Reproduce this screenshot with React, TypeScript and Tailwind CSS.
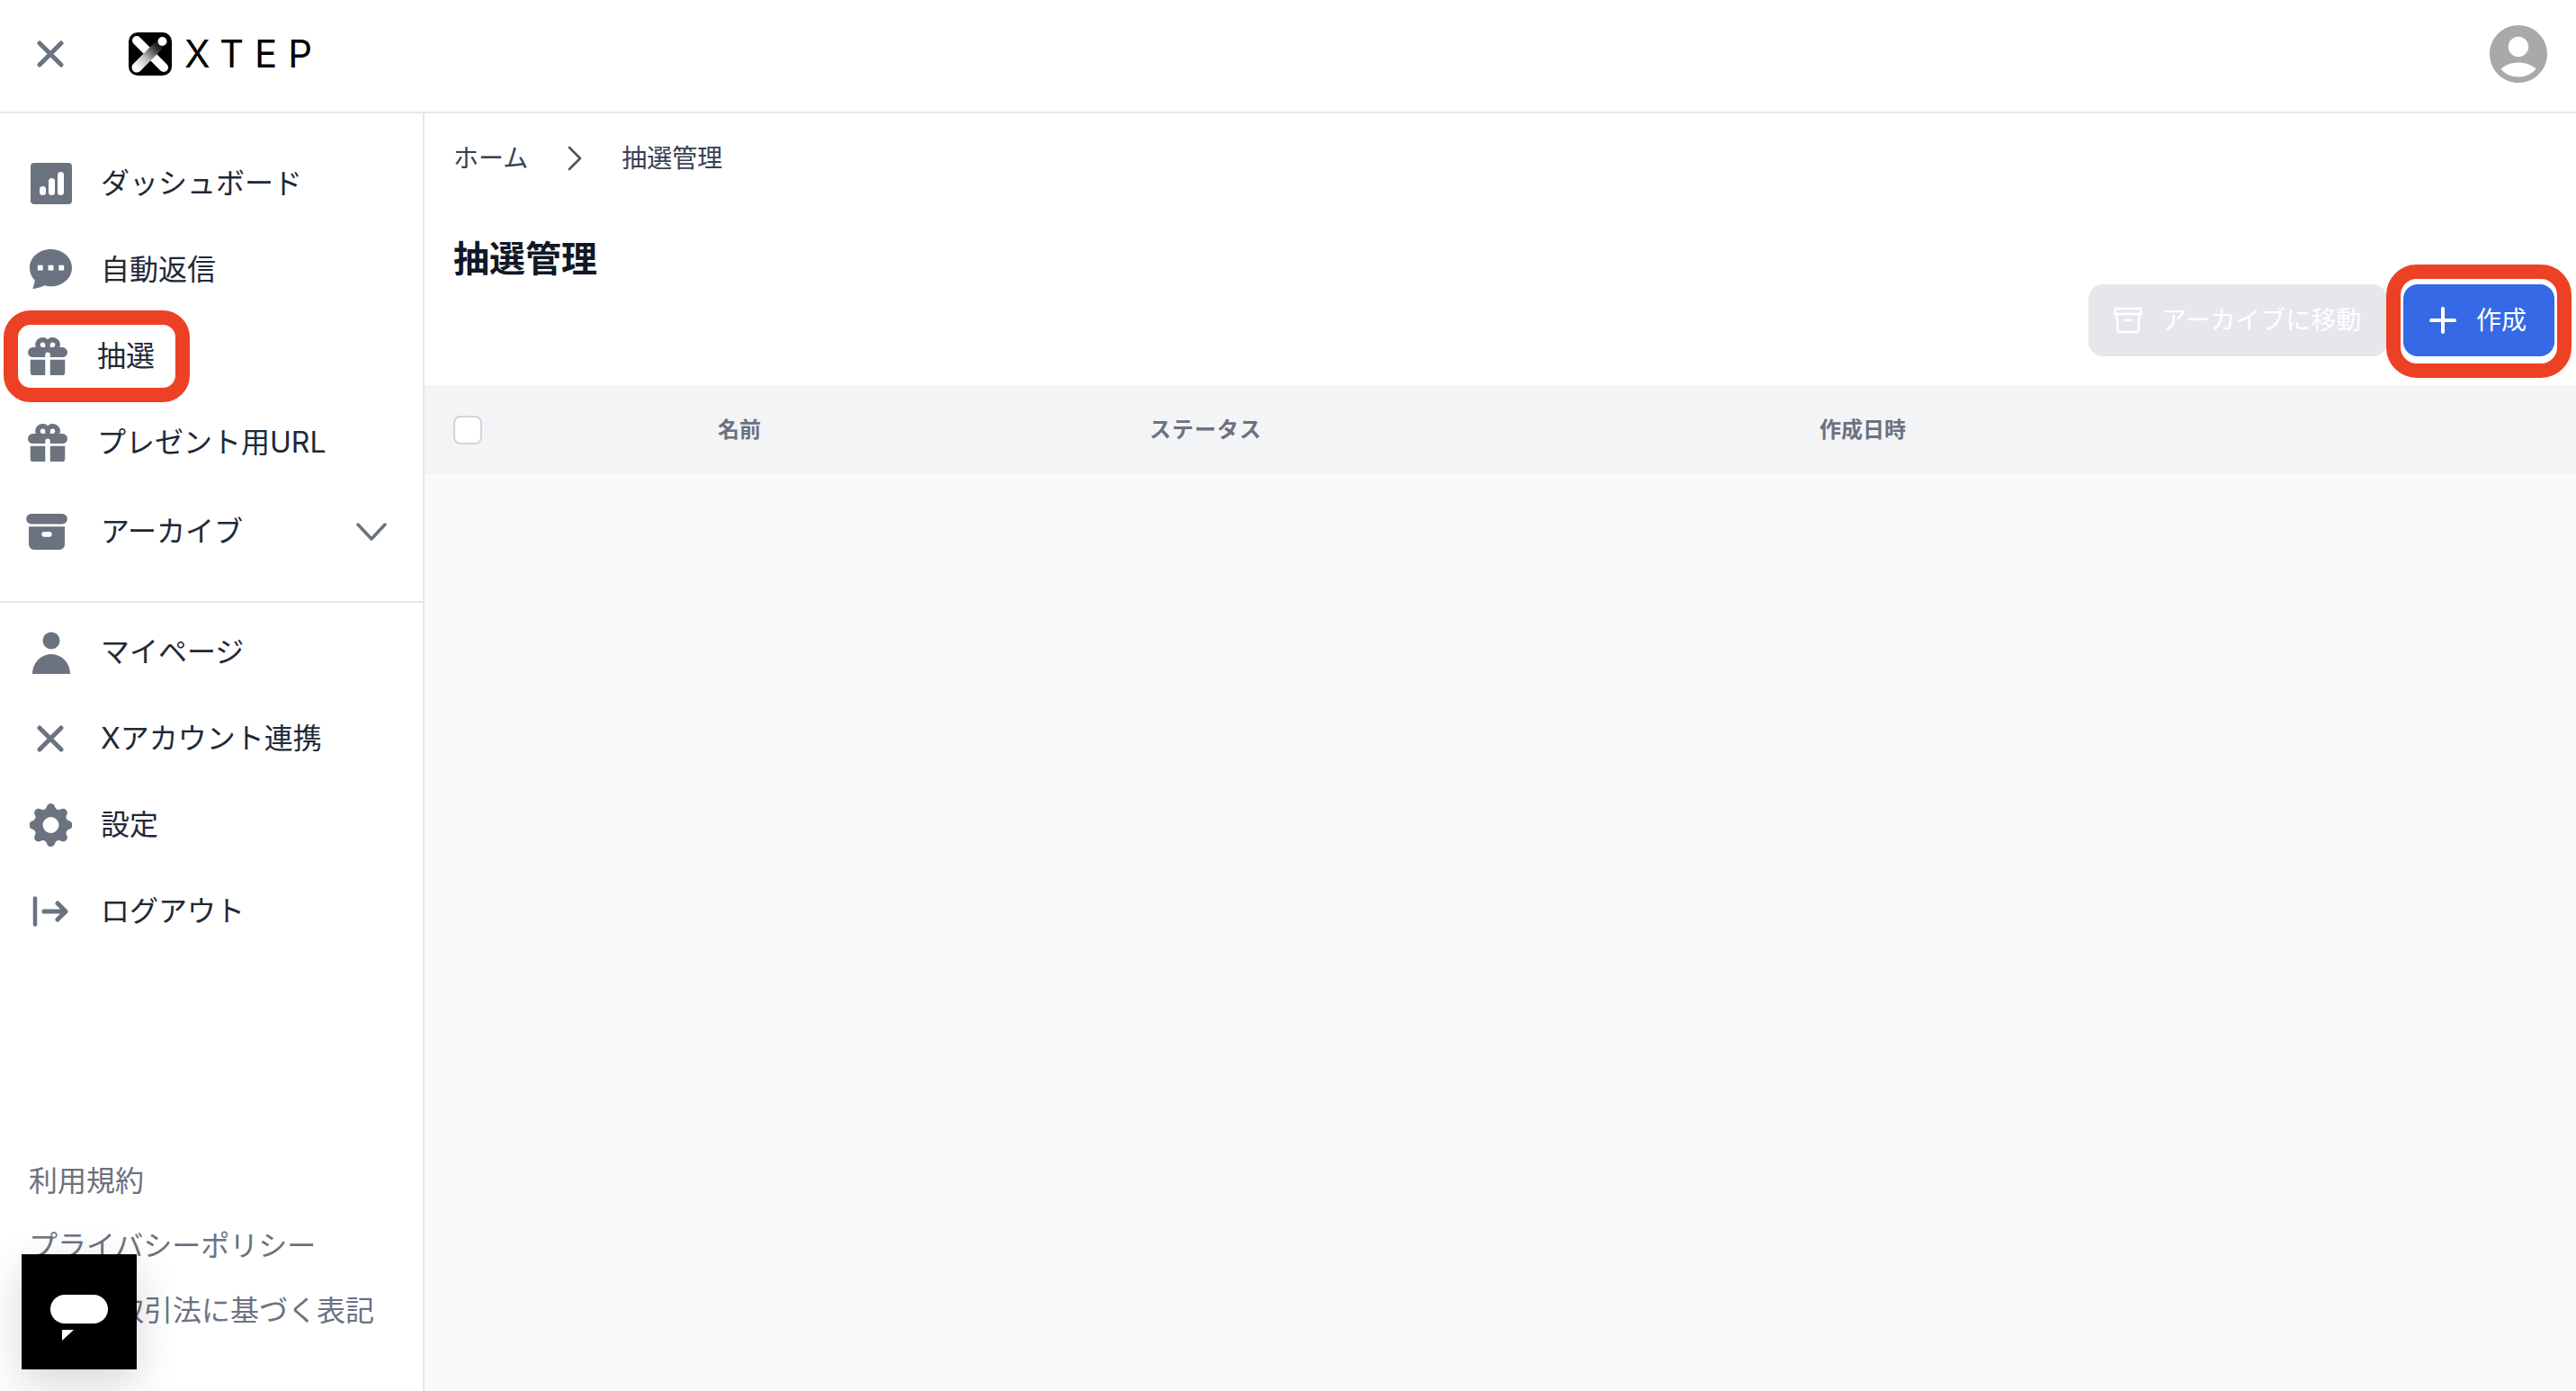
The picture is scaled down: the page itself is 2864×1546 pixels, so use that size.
import type { ReactNode } from "react";

function GiftIcon() {
  return (
    <svg viewBox="2 2 16 15.2" className="ml-[7px] h-[42px] w-[44px] fill-[#6b7280]">
      <path
        fillRule="evenodd"
        clipRule="evenodd"
        d="M5 5a3 3 0 015-2.236A3 3 0 0114.83 6H16a2 2 0 110 4h-5V9a1 1 0 10-2 0v1H4a2 2 0 110-4h1.17C5.06 5.687 5 5.35 5 5zm4 1V5a1 1 0 10-1 1h1zm3 0a1 1 0 10-1-1v1h1z"
      />
      <path d="M9 11H3v5a2 2 0 002 2h4v-7zM11 18h4a2 2 0 002-2v-5h-6v7z" />
    </svg>
  );
}

function ChartIcon() {
  return (
    <svg viewBox="0 0 46 46" className="ml-[10px] h-[46px] w-[46px]">
      <rect width="46" height="46" rx="4" fill="#6b7280" />
      <rect x="10" y="26" width="7" height="10" rx="3.5" fill="#fff" />
      <rect x="20" y="17" width="7" height="19" rx="3.5" fill="#fff" />
      <rect x="30" y="10" width="7" height="26" rx="3.5" fill="#fff" />
    </svg>
  );
}

function ChatIcon() {
  return (
    <svg viewBox="2 3 16 15.6" className="ml-[9px] h-[46px] w-[47px] fill-[#6b7280]">
      <path
        fillRule="evenodd"
        clipRule="evenodd"
        d="M18 10c0 3.866-3.582 7-8 7a8.841 8.841 0 01-2.347-.306c-.584.296-1.925.864-4.181 1.234-.2.032-.352-.176-.273-.362.354-.836.674-1.95.77-2.966C2.744 13.566 2 11.853 2 10c0-3.866 3.582-7 8-7s8 3.134 8 7zM7 9H5v2h2V9zm8 0h-2v2h2V9zM9 9h2v2H9V9z"
      />
    </svg>
  );
}

function ArchiveIcon() {
  return (
    <svg viewBox="2 3 16 14" className="ml-[5px] h-[40px] w-[46px] fill-[#6b7280]">
      <path d="M4 3a2 2 0 100 4h12a2 2 0 100-4H4z" />
      <path
        fillRule="evenodd"
        clipRule="evenodd"
        d="M3 8h14v7a2 2 0 01-2 2H5a2 2 0 01-2-2V8zm5 3a1 1 0 011-1h2a1 1 0 110 2H9a1 1 0 01-1-1z"
      />
    </svg>
  );
}

function UserIcon() {
  return (
    <svg viewBox="0 0 42 47" className="ml-[12px] mt-[1px] h-[47px] w-[42px] fill-[#6b7280]">
      <circle cx="21" cy="10" r="9.5" />
      <path d="M0 47a21 22 0 0142 0z" />
    </svg>
  );
}

function CloseIcon({ className }: { className: string }) {
  return (
    <svg viewBox="0 0 30 30" className={className} fill="none" stroke="#6b7280" strokeWidth="5" strokeLinecap="round">
      <path d="M3 3l24 24M27 3L3 27" />
    </svg>
  );
}

function GearIcon() {
  return (
    <svg viewBox="2.3 2 15.4 16" className="ml-[9px] h-[48px] w-[47px] fill-[#6b7280]">
      <path
        fillRule="evenodd"
        clipRule="evenodd"
        d="M11.49 3.17c-.38-1.56-2.6-1.56-2.98 0a1.532 1.532 0 01-2.286.948c-1.372-.836-2.942.734-2.106 2.106.54.886.061 2.042-.947 2.287-1.561.379-1.561 2.6 0 2.978a1.532 1.532 0 01.947 2.287c-.836 1.372.734 2.942 2.106 2.106a1.532 1.532 0 012.287.947c.379 1.561 2.6 1.561 2.978 0a1.533 1.533 0 012.287-.947c1.372.836 2.942-.734 2.106-2.106a1.533 1.533 0 01.947-2.287c1.561-.379 1.561-2.6 0-2.978a1.532 1.532 0 01-.947-2.287c.836-1.372-.734-2.942-2.106-2.106a1.532 1.532 0 01-2.287-.947zM10 13a3 3 0 100-6 3 3 0 000 6z"
      />
    </svg>
  );
}

function LogoutIcon() {
  return (
    <svg viewBox="0 0 40 34" className="ml-[12px] h-[34px] w-[40px]" fill="none" stroke="#6b7280" strokeLinecap="round" strokeLinejoin="round">
      <path d="M3 2.5v29" strokeWidth="4.5" />
      <path d="M13 17h24M28 8l9 9-9 9" strokeWidth="5" />
    </svg>
  );
}

function LogoMark() {
  return (
    <svg viewBox="0 0 48 48" className="h-[48px] w-[48px]">
      <defs>
        <linearGradient id="logoBar" gradientUnits="userSpaceOnUse" x1="9" y1="39" x2="32" y2="16">
          <stop offset="0" stopColor="#fff" />
          <stop offset="0.45" stopColor="#bbb" />
          <stop offset="1" stopColor="#222" />
        </linearGradient>
      </defs>
      <rect width="48" height="48" rx="10" fill="#000" />
      <path d="M9 9l30 30" stroke="#fff" strokeWidth="10" strokeLinecap="round" />
      <path d="M9 39l23-23" stroke="url(#logoBar)" strokeWidth="11" strokeLinecap="round" />
      <circle cx="37.5" cy="10" r="5" fill="#fff" />
    </svg>
  );
}

function NavItem({ icon, label, box = "w-[88px]", children }: { icon: ReactNode; label: string; box?: string; children?: ReactNode }) {
  return (
    <div className="relative flex h-[96px] items-center pl-[24px] text-[32px] text-[#1f2937]">
      <div className={`${box} flex shrink-0 items-center`}>{icon}</div>
      <span>{label}</span>
      {children}
    </div>
  );
}

export default function App() {
  return (
    <div
      lang="ja"
      className="relative flex h-[1546px] w-full flex-col overflow-hidden bg-white font-['Inter','Noto_Sans_CJK_JP',sans-serif]"
    >
      <header className="flex h-[126px] shrink-0 items-center border-b-2 border-[#e5e7eb] pb-[4px] pl-[41px] pr-[32px]">
        <CloseIcon className="h-[30px] w-[30px]" />
        <div className="ml-[72px]">
          <LogoMark />
        </div>
        <span className="ml-[14px] text-[42px] font-normal leading-none tracking-[12px] text-black">XTEP</span>
        <svg viewBox="2 2 20 20" className="ml-auto h-[64px] w-[64px] fill-[#a9a9a9]">
          <path d="M12 2C6.48 2 2 6.48 2 12s4.48 10 10 10 10-4.48 10-10S17.52 2 12 2zm0 4c1.93 0 3.5 1.57 3.5 3.5S13.93 13 12 13s-3.5-1.57-3.5-3.5S10.07 6 12 6zm0 14c-2.03 0-4.43-.82-6.14-2.88C7.55 15.8 9.68 15 12 15s4.45.8 6.14 2.12C16.43 19.18 14.03 20 12 20z" />
        </svg>
      </header>

      <div className="flex min-h-0 flex-1">
        <aside className="flex w-[472px] shrink-0 flex-col border-r-2 border-[#e5e7eb] bg-white pt-[30px]">
          <NavItem icon={<ChartIcon />} label="ダッシュボード" />
          <NavItem icon={<ChatIcon />} label="自動返信" />
          <NavItem icon={<GiftIcon />} label="抽選" box="w-[84px]">
            <div className="absolute left-[4px] top-[-3px] h-[102px] w-[207px] rounded-[30px] border-[16px] border-[#ed4126]" />
          </NavItem>
          <NavItem icon={<GiftIcon />} label="プレゼント用URL" box="w-[84px]" />
          <div className="mt-[3px]">
            <NavItem icon={<ArchiveIcon />} label="アーカイブ">
              <svg viewBox="0 0 34 20" className="ml-auto mr-[40px] h-[20px] w-[34px]" fill="none" stroke="#6b7280" strokeWidth="3.5" strokeLinecap="round" strokeLinejoin="round">
                <path d="M2 2l15 16L32 2" />
              </svg>
            </NavItem>
          </div>
          <div className="mt-[29px] h-[2px] bg-[#e5e7eb]" />
          <div className="mt-[7px]">
            <NavItem icon={<UserIcon />} label="マイページ" />
            <NavItem icon={<CloseIcon className="ml-[17px] h-[30px] w-[30px]" />} label="Xアカウント連携" />
            <NavItem icon={<GearIcon />} label="設定" />
            <NavItem icon={<LogoutIcon />} label="ログアウト" />
          </div>
          <div className="mt-auto pb-[53px] pl-[32px] text-[32px] text-[#6b7280]">
            <div className="flex h-[72px] items-center">利用規約</div>
            <div className="flex h-[72px] items-center">プライバシーポリシー</div>
            <div className="flex h-[72px] items-center">特定商取引法に基づく表記</div>
          </div>
        </aside>

        <main className="flex min-w-0 flex-1 flex-col bg-[#f9fafb]">
          <div className="bg-white pl-[32px] pr-[24px]">
            <nav className="flex h-[99px] items-center text-[28px] text-[#374151]">
              <span>ホーム</span>
              <svg viewBox="0 0 16 28" className="ml-[44px] h-[28px] w-[16px]" fill="none" stroke="#4b5563" strokeWidth="2.6" strokeLinecap="round" strokeLinejoin="round">
                <path d="M2 2l12 12L2 26" />
              </svg>
              <span className="ml-[44px]">抽選管理</span>
            </nav>
            <h1 className="mt-[33px] text-[40px] font-bold leading-[60px] text-[#111827]">抽選管理</h1>
            <div className="mt-[-2px] flex justify-end gap-[18px] pb-[32px] text-[28px] text-white">
              <button type="button" className="flex h-[80px] w-[332px] items-center rounded-[16px] bg-[#e5e7eb] pl-[27px]">
                <svg viewBox="0 0 34 30" className="h-[30px] w-[34px] shrink-0" fill="none" stroke="#fff" strokeWidth="2.4" strokeLinecap="round" strokeLinejoin="round">
                  <path d="M2.5 2h29v6h-29zM4.5 8l1 18a2.5 2.5 0 002.5 2h18a2.5 2.5 0 002.5-2l1-18M13.5 15h7" />
                </svg>
                <span className="ml-[20px] whitespace-nowrap">アーカイブに移動</span>
              </button>
              <button type="button" className="relative flex h-[80px] w-[168px] items-center rounded-[16px] bg-[#3569e5] pl-[29px]">
                <svg viewBox="0 0 30 30" className="h-[30px] w-[30px] shrink-0" fill="none" stroke="#fff" strokeWidth="4" strokeLinecap="round">
                  <path d="M15 2v26M2 15h26" />
                </svg>
                <span className="ml-[22px]">作成</span>
                <div className="absolute left-[-19px] top-[-22px] h-[126px] w-[206px] rounded-[34px] border-[16px] border-[#ed4126]" />
              </button>
            </div>
          </div>
          <div className="grid h-[99px] grid-cols-[294px_482px_743px_1fr] items-center bg-[#f3f4f6] pl-[32px] text-[24px] font-bold text-[#6b7280]">
            <div className="h-[32px] w-[32px] rounded-[8px] border-2 border-[#d1d5db] bg-white" />
            <div>名前</div>
            <div className="ml-[-2px] tracking-[1px]">ステータス</div>
            <div>作成日時</div>
          </div>
        </main>
      </div>

      <div className="absolute bottom-[24px] left-[24px] flex h-[128px] w-[128px] items-center justify-center bg-black pt-[14px] shadow-[0_16px_48px_rgba(0,0,0,0.16)]">
        <svg viewBox="0 0 64 52" className="h-[52px] w-[64px] fill-white">
          <rect width="64" height="32" rx="16" />
          <path d="M13 39h13L13 51z" />
        </svg>
      </div>
    </div>
  );
}
